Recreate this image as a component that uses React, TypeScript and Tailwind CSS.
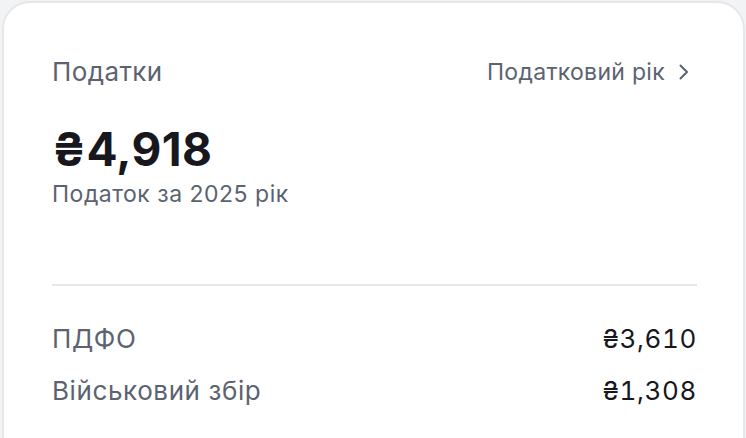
const rows = [
  { label: "ПДФО", amount: "₴3,610" },
  { label: "Військовий збір", amount: "₴1,308" },
]

const Chevron = () => (
  <svg width="10" height="16" viewBox="0 0 10 16" fill="none" className="shrink-0">
    <path d="M1.5 1.5l6.5 6.5-6.5 6.5" stroke="currentColor" strokeWidth="2" strokeLinecap="round" strokeLinejoin="round" />
  </svg>
)

const App = () => {
  return (
    <div className="h-[438px] w-[746px] overflow-hidden bg-[#f2f3f5] pl-[2px] pr-[1px] pt-[1px] font-['Inter',sans-serif]">
      <div className="min-h-[480px] rounded-[28px] border-2 border-[#e6e7ea] bg-white pl-12 pr-[46px] pt-[53px]">
        <div className="flex items-center justify-between">
          <h2 className="text-[26px] leading-8 tracking-[0.4px] text-[#5b6371]">Податки</h2>
          <button className="flex items-center gap-[14px] pr-[8px] text-[23px] leading-8 tracking-[0.3px] text-[#5b6371]">
            Податковий рік
            <Chevron />
          </button>
        </div>

        <div className="mt-[38px] text-[46px] font-bold leading-[46px] tracking-[0.4px] text-[#16181d]">
          ₴4,918
        </div>
        <p className="mt-2 text-[23px] leading-7 tracking-[0.5px] text-[#5b6371]">
          Податок за 2025 рік
        </p>

        <div className="mt-[76px] h-[2px] bg-[#e6e7ea]" />

        <div className="mt-[37px] flex flex-col gap-5">
          {rows.map((row) => (
            <div key={row.label} className="flex items-center justify-between text-[26px] leading-8">
              <span className="tracking-[0.6px] text-[#5b6371]">{row.label}</span>
              <span className="tabular-nums tracking-[0.6px] text-[#16181d]">{row.amount}</span>
            </div>
          ))}
        </div>
      </div>
    </div>
  )
}

export default App
